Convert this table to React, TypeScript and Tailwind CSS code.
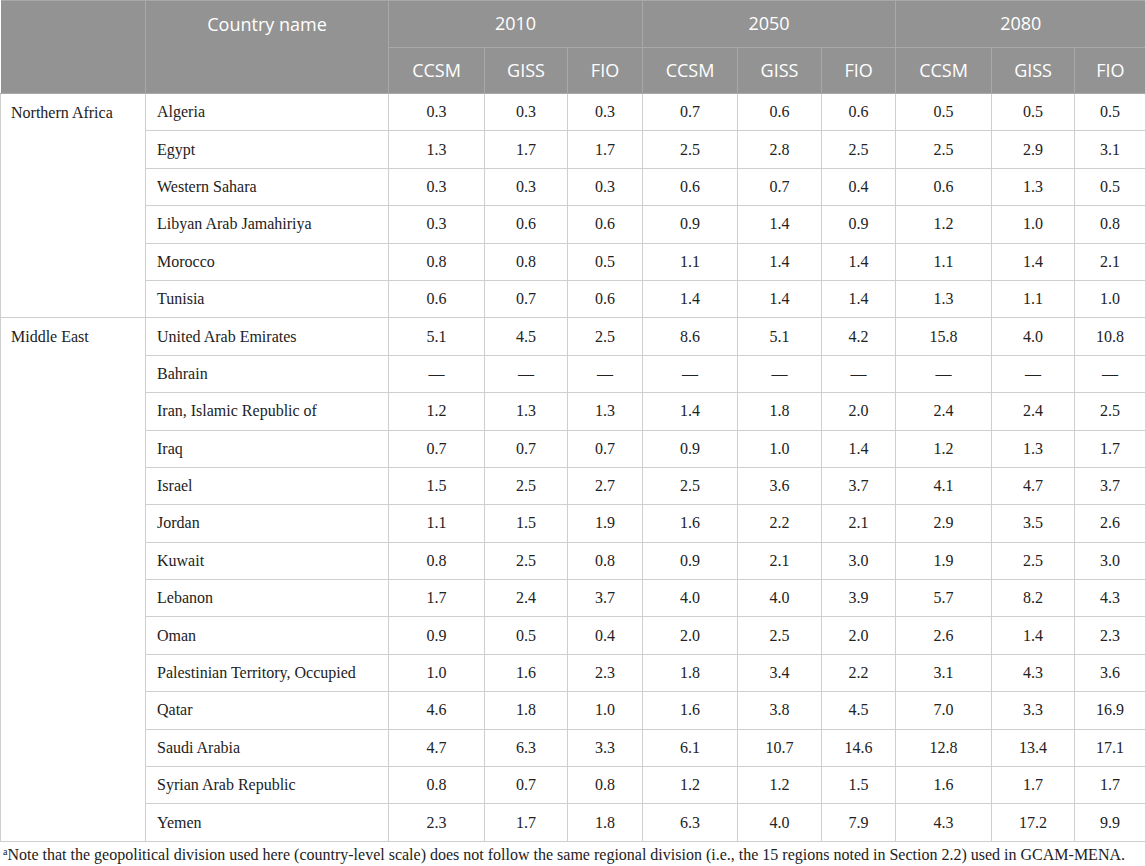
import React from 'react';

type Row = { country: string; v: string[] };

const northernAfrica: Row[] = [
  { country: 'Algeria', v: ['0.3', '0.3', '0.3', '0.7', '0.6', '0.6', '0.5', '0.5', '0.5'] },
  { country: 'Egypt', v: ['1.3', '1.7', '1.7', '2.5', '2.8', '2.5', '2.5', '2.9', '3.1'] },
  { country: 'Western Sahara', v: ['0.3', '0.3', '0.3', '0.6', '0.7', '0.4', '0.6', '1.3', '0.5'] },
  { country: 'Libyan Arab Jamahiriya', v: ['0.3', '0.6', '0.6', '0.9', '1.4', '0.9', '1.2', '1.0', '0.8'] },
  { country: 'Morocco', v: ['0.8', '0.8', '0.5', '1.1', '1.4', '1.4', '1.1', '1.4', '2.1'] },
  { country: 'Tunisia', v: ['0.6', '0.7', '0.6', '1.4', '1.4', '1.4', '1.3', '1.1', '1.0'] },
];

const dash = '—';

const middleEast: Row[] = [
  { country: 'United Arab Emirates', v: ['5.1', '4.5', '2.5', '8.6', '5.1', '4.2', '15.8', '4.0', '10.8'] },
  { country: 'Bahrain', v: [dash, dash, dash, dash, dash, dash, dash, dash, dash] },
  { country: 'Iran, Islamic Republic of', v: ['1.2', '1.3', '1.3', '1.4', '1.8', '2.0', '2.4', '2.4', '2.5'] },
  { country: 'Iraq', v: ['0.7', '0.7', '0.7', '0.9', '1.0', '1.4', '1.2', '1.3', '1.7'] },
  { country: 'Israel', v: ['1.5', '2.5', '2.7', '2.5', '3.6', '3.7', '4.1', '4.7', '3.7'] },
  { country: 'Jordan', v: ['1.1', '1.5', '1.9', '1.6', '2.2', '2.1', '2.9', '3.5', '2.6'] },
  { country: 'Kuwait', v: ['0.8', '2.5', '0.8', '0.9', '2.1', '3.0', '1.9', '2.5', '3.0'] },
  { country: 'Lebanon', v: ['1.7', '2.4', '3.7', '4.0', '4.0', '3.9', '5.7', '8.2', '4.3'] },
  { country: 'Oman', v: ['0.9', '0.5', '0.4', '2.0', '2.5', '2.0', '2.6', '1.4', '2.3'] },
  { country: 'Palestinian Territory, Occupied', v: ['1.0', '1.6', '2.3', '1.8', '3.4', '2.2', '3.1', '4.3', '3.6'] },
  { country: 'Qatar', v: ['4.6', '1.8', '1.0', '1.6', '3.8', '4.5', '7.0', '3.3', '16.9'] },
  { country: 'Saudi Arabia', v: ['4.7', '6.3', '3.3', '6.1', '10.7', '14.6', '12.8', '13.4', '17.1'] },
  { country: 'Syrian Arab Republic', v: ['0.8', '0.7', '0.8', '1.2', '1.2', '1.5', '1.6', '1.7', '1.7'] },
  { country: 'Yemen', v: ['2.3', '1.7', '1.8', '6.3', '4.0', '7.9', '4.3', '17.2', '9.9'] },
];

const models = ['CCSM', 'GISS', 'FIO', 'CCSM', 'GISS', 'FIO', 'CCSM', 'GISS', 'FIO'];

const headCell = 'border border-[#a9a9a9] text-white font-normal text-[18px]';
const bodyCell = 'border border-[#cfcfcf] h-[37.4px] text-[16px] text-[#222]';

function Region({ name, rows }: { name: string; rows: Row[] }) {
  return (
    <>
      {rows.map((r, i) => (
        <tr key={r.country}>
          {i === 0 && (
            <td rowSpan={rows.length} className={`${bodyCell} align-top pl-[10px] pt-[7px]`}>
              {name}
            </td>
          )}
          <td className={`${bodyCell} pl-[11px]`}>{r.country}</td>
          {r.v.map((x, j) => (
            <td key={j} className={`${bodyCell} text-center`}>
              {x}
            </td>
          ))}
        </tr>
      ))}
    </>
  );
}

export default function App() {
  return (
    <div className="w-[1145px] h-[866px] bg-white overflow-hidden font-['Liberation_Serif',serif]">
      <table className="w-[1145px] border-collapse table-fixed">
        <colgroup>
          <col className="w-[145px]" />
          <col className="w-[243px]" />
          <col className="w-[96px]" />
          <col className="w-[83px]" />
          <col className="w-[75px]" />
          <col className="w-[95px]" />
          <col className="w-[84px]" />
          <col className="w-[74px]" />
          <col className="w-[96px]" />
          <col className="w-[83px]" />
          <col className="w-[71px]" />
        </colgroup>
        <thead className="bg-[#939393] font-['Open_Sans',sans-serif]">
          <tr className="h-[46.5px]">
            <th rowSpan={2} className={`${headCell} border-l-0`} />
            <th rowSpan={2} className={`${headCell} align-top pt-[10px]`}>
              Country name
            </th>
            <th colSpan={3} className={headCell}>2010</th>
            <th colSpan={3} className={headCell}>2050</th>
            <th colSpan={3} className={`${headCell} border-r-0`}>2080</th>
          </tr>
          <tr className="h-[46.5px]">
            {models.map((m, i) => (
              <th key={i} className={`${headCell} ${i === 8 ? 'border-r-0' : ''}`}>
                {m}
              </th>
            ))}
          </tr>
        </thead>
        <tbody>
          <Region name="Northern Africa" rows={northernAfrica} />
          <Region name="Middle East" rows={middleEast} />
        </tbody>
      </table>
      <p className="pl-[3px] pt-[1px] text-[16px] text-[#222]">
        <sup className="text-[10px]">a</sup>Note that the geopolitical division used here (country-level scale) does not follow the same regional division (i.e., the 15 regions noted in Section 2.2) used in GCAM-MENA.
      </p>
    </div>
  );
}
